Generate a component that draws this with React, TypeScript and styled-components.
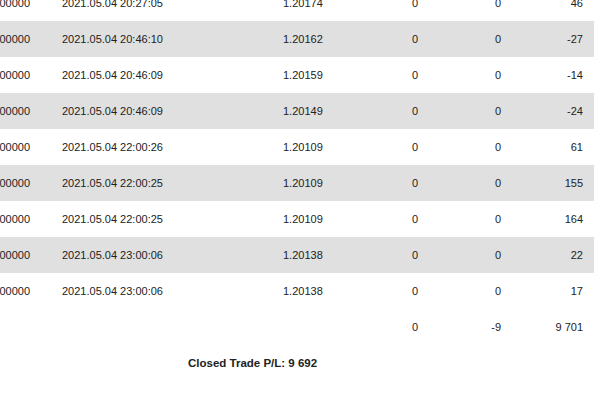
import React from "react";
import styled, { createGlobalStyle } from "styled-components";

const Global = createGlobalStyle`
  html, body {
    margin: 0;
    padding: 0;
    background: #ffffff;
    overflow: hidden;
  }
  body {
    font-family: "Liberation Sans", Arial, sans-serif;
    font-size: 11px;
    color: #222222;
  }
`;

const Report = styled.div`
  width: 594px;
  margin-top: -15px;
  display: flex;
  flex-direction: column;
`;

const Row = styled.div<{ $shade?: boolean }>`
  display: grid;
  grid-template-columns: 46px 229px 65px 84px 83px 87px;
  height: 36px;
  align-items: center;
  background: ${(p) => (p.$shade ? "#e0e0e0" : "#ffffff")};
  white-space: nowrap;
`;

const LotCell = styled.div`
  display: flex;
  justify-content: flex-end;
  padding-right: 16px;
  min-width: 0;
`;

const TimeCell = styled.div`
  padding-left: 16px;
`;

const PriceCell = styled.div`
  padding-left: 8px;
`;

const NumCell = styled.div<{ $pr: number }>`
  text-align: right;
  padding-right: ${(p) => p.$pr}px;
`;

const Footer = styled.div`
  height: 36px;
  display: flex;
  align-items: center;
  padding-left: 188px;
  font-weight: bold;
  font-size: 11.5px;
`;

type Trade = { tp: string; time: string; price: string; comm: string; swap: string; profit: string };

const trades: Trade[] = [
  { tp: "0.00000", time: "2021.05.04 20:27:05", price: "1.20174", comm: "0", swap: "0", profit: "46" },
  { tp: "0.00000", time: "2021.05.04 20:46:10", price: "1.20162", comm: "0", swap: "0", profit: "-27" },
  { tp: "0.00000", time: "2021.05.04 20:46:09", price: "1.20159", comm: "0", swap: "0", profit: "-14" },
  { tp: "0.00000", time: "2021.05.04 20:46:09", price: "1.20149", comm: "0", swap: "0", profit: "-24" },
  { tp: "0.00000", time: "2021.05.04 22:00:26", price: "1.20109", comm: "0", swap: "0", profit: "61" },
  { tp: "0.00000", time: "2021.05.04 22:00:25", price: "1.20109", comm: "0", swap: "0", profit: "155" },
  { tp: "0.00000", time: "2021.05.04 22:00:25", price: "1.20109", comm: "0", swap: "0", profit: "164" },
  { tp: "0.00000", time: "2021.05.04 23:00:06", price: "1.20138", comm: "0", swap: "0", profit: "22" },
  { tp: "0.00000", time: "2021.05.04 23:00:06", price: "1.20138", comm: "0", swap: "0", profit: "17" },
];

export default function App() {
  return (
    <>
      <Global />
      <Report>
        {trades.map((t, i) => (
          <Row key={i} $shade={i % 2 === 1}>
            <LotCell>{t.tp}</LotCell>
            <TimeCell>{t.time}</TimeCell>
            <PriceCell>{t.price}</PriceCell>
            <NumCell $pr={6}>{t.comm}</NumCell>
            <NumCell $pr={6}>{t.swap}</NumCell>
            <NumCell $pr={11}>{t.profit}</NumCell>
          </Row>
        ))}
        <Row>
          <LotCell />
          <TimeCell />
          <PriceCell />
          <NumCell $pr={6}>0</NumCell>
          <NumCell $pr={6}>-9</NumCell>
          <NumCell $pr={11}>9 701</NumCell>
        </Row>
        <Footer>Closed Trade P/L: 9 692</Footer>
      </Report>
    </>
  );
}
